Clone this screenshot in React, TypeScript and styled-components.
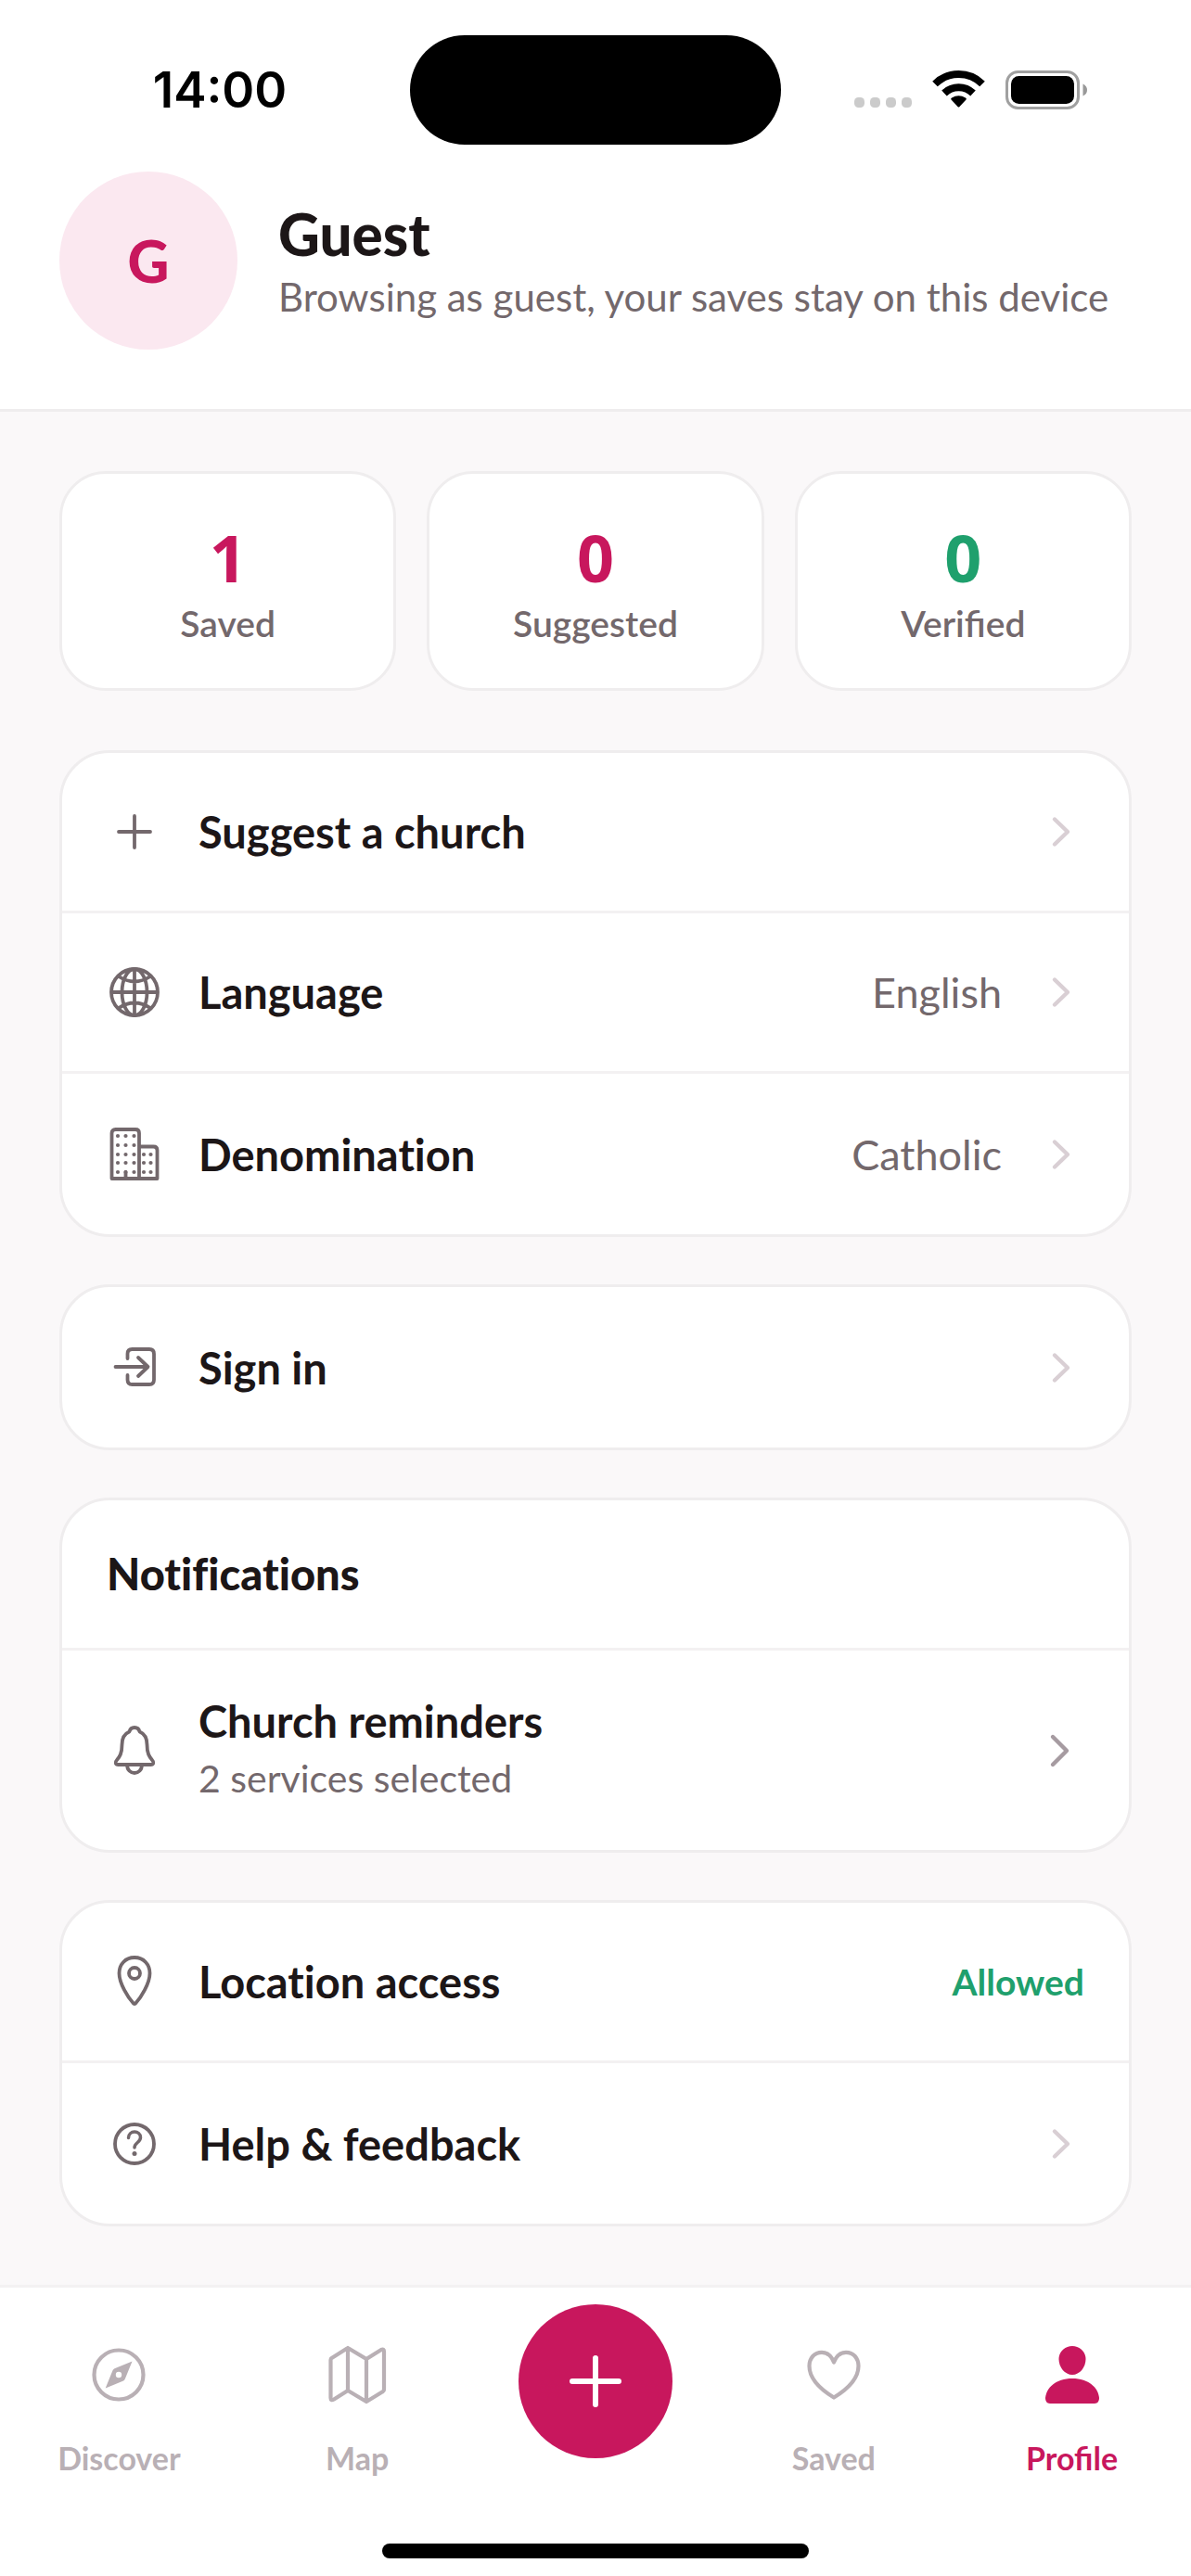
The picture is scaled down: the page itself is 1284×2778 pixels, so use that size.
import { ReactNode } from "react";
import styled, { createGlobalStyle } from "styled-components";

const color = {
    primary: "#c8175d",
    primarySoft: "#fbe8f0",
    green: "#1fa06d",
    ink: "#1c1617",
    sub: "#73686c",
    muted: "#b9b0b5",
    chevron: "#d9cfd4",
    chevronDark: "#a69ba1",
    line: "#efedee",
    divider: "#f3f1f2",
    page: "#faf8f9",
}

const GlobalStyle = createGlobalStyle`
    *{
        box-sizing: border-box;
        margin: 0;
        padding: 0;
    }
    body{
        background-color: ${color.page};
        color: ${color.ink};
        font-family: Lato, "Liberation Sans", sans-serif;
    }
    button{
        border: none;
        background: none;
        color: inherit;
        font: inherit;
        text-align: left;
        cursor: pointer;
    }
    a{
        color: inherit;
        text-decoration: none;
    }
    svg{
        display: block;
        flex-shrink: 0;
    }
`

const Page = styled.div`
    display: flex;
    flex-direction: column;
    min-height: 100vh;
`

const Header = styled.header`
    background-color: #fff;
    border-bottom: 3px solid ${color.line};
    padding-bottom: 64px;
`

const StatusBar = styled.div`
    display: grid;
    grid-template-columns: 1fr 400px 1fr;
    align-items: center;
    padding: 38px 32px 29px;
`

const Time = styled.time`
    justify-self: center;
    color: #000;
    font-family: Inter, sans-serif;
    font-size: 53px;
    font-weight: 600;
`

const Island = styled.div`
    height: 118px;
    border-radius: 59px;
    background-color: #000;
`

const StatusIcon = styled.svg`
    justify-self: center;
`

const Profile = styled.div`
    display: flex;
    align-items: center;
    gap: 44px;
    padding: 0 64px;
`

const Avatar = styled.div`
    display: flex;
    align-items: center;
    justify-content: center;
    width: 192px;
    height: 192px;
    border-radius: 50%;
    background-color: ${color.primarySoft};
    color: ${color.primary};
    font-size: 62px;
    font-weight: 900;
    line-height: 76px;
`

const Name = styled.h1`
    padding-top: 2px;
    font-size: 62px;
    font-weight: 900;
    line-height: 76px;
`

const Description = styled.p`
    color: ${color.sub};
    font-size: 42px;
    line-height: 60px;
`

const Main = styled.main`
    display: flex;
    flex: 1;
    flex-direction: column;
    gap: 51px;
    padding: 64px 64px 63px;
`

const Stats = styled.dl`
    display: grid;
    grid-template-columns: repeat(3, 1fr);
    gap: 33px;
    margin-bottom: 13px;
`

const Card = styled.section`
    overflow: hidden;
    border: 3px solid ${color.line};
    border-radius: 54px;
    background-color: #fff;
`

const Stat = styled.div`
    display: flex;
    flex-direction: column-reverse;
    align-items: center;
    padding: 48px 0 41px;
    border: 3px solid ${color.line};
    border-radius: 50px;
    background-color: #fff;
`

const StatValue = styled.dd<{ $green?: boolean }>`
    color: ${({ $green }) => ($green ? color.green : color.primary)};
    font-family: "Open Sans", sans-serif;
    font-size: 70px;
    font-weight: 700;
    line-height: 84px;
`

const StatLabel = styled.dt`
    color: ${color.sub};
    font-size: 39px;
    font-weight: 600;
    line-height: 58px;
`

const Row = styled.button<{ $tall?: boolean }>`
    display: flex;
    align-items: center;
    gap: 39px;
    width: 100%;
    min-height: ${({ $tall }) => ($tall ? 215 : 173)}px;
    padding: 0 48px;
    font-variant-ligatures: none;
    &:not(:last-child){
        border-bottom: 3px solid ${color.divider};
    }
`

const RowText = styled.span`
    flex: 1;
    font-size: 47px;
    font-weight: 700;
    line-height: 60px;
`

const RowHint = styled.span`
    display: block;
    color: ${color.sub};
    font-size: 41px;
    font-weight: 400;
    line-height: 64px;
`

const RowValue = styled.span`
    color: ${color.sub};
    font-size: 45px;
`

const RowStatus = styled.span`
    color: ${color.green};
    font-size: 39px;
    font-weight: 700;
`

const CardTitle = styled.h2`
    padding: 49px 48px 50px;
    border-bottom: 3px solid ${color.divider};
    font-size: 47px;
    font-weight: 900;
    font-variant-ligatures: none;
    line-height: 60px;
`

const TabBar = styled.footer`
    border-top: 3px solid ${color.divider};
    background-color: #fff;
`

const Tabs = styled.nav`
    display: grid;
    grid-template-columns: repeat(5, 1fr);
    justify-items: center;
`

const Tab = styled.a<{ $active?: boolean }>`
    display: flex;
    flex-direction: column;
    align-items: center;
    gap: 38px;
    padding-top: 62px;
    color: ${({ $active }) => ($active ? color.primary : color.muted)};
    font-size: 34px;
    font-weight: 700;
    line-height: 40px;
`

const AddButton = styled.button`
    display: flex;
    align-items: center;
    justify-content: center;
    width: 166px;
    height: 166px;
    margin-top: 18px;
    border-radius: 50%;
    background-color: ${color.primary};
    color: #fff;
`

const HomeIndicator = styled.div`
    width: 460px;
    height: 16px;
    margin: 72px auto 19px;
    border-radius: 8px;
    background-color: #000;
`

const RowIcon = ({ children }: { children: ReactNode }):JSX.Element => (
    <svg width="60" height="60" viewBox="0 0 60 60" fill="none" stroke={color.sub} strokeWidth="3.8" strokeLinecap="round" strokeLinejoin="round" aria-hidden="true">
        {children}
    </svg>
)

const TabIcon = ({ children }: { children: ReactNode }):JSX.Element => (
    <svg width="64" height="64" viewBox="0 0 64 64" fill="none" stroke="currentColor" strokeWidth="4.2" strokeLinecap="round" strokeLinejoin="round" aria-hidden="true">
        {children}
    </svg>
)

const Chevron = ({ dark }: { dark?: boolean }):JSX.Element => (
    <svg width="50" height="60" viewBox="0 0 50 60" fill="none" stroke={dark ? color.chevronDark : color.chevron} strokeWidth="4.4" strokeLinecap="round" strokeLinejoin="round" aria-hidden="true">
        <path d={dark ? "M16 15L31 30L16 45" : "M18 16.500L32 30L18 43.500"}/>
    </svg>
)

const StatusIcons = ():JSX.Element => (
    <StatusIcon width="252" height="44" viewBox="0 0 252 44" aria-hidden="true">
        <g fill="#cbcbcb">
            {[0, 17, 34, 51].map((x) => (
                <rect key={x} x={x} y="30" width="11" height="11" rx="4.5"/>
            ))}
        </g>
        <g fill="none" stroke="#000" strokeWidth="8">
            <path d="M87 15.5A36.5 36.5 0 0 1 138 15.5"/>
            <path d="M97 25.5A22.3 22.3 0 0 1 128 25.5"/>
        </g>
        <path d="M104.5 32.5Q103.5 31.5 105 30.5Q112.5 26 120 30.5Q121.5 31.5 120.5 32.5L113.5 40Q112.5 41 111.5 40Z"/>
        <rect x="164.5" y="2.5" width="77" height="39" rx="12" fill="none" stroke="#a0a0a0" strokeWidth="3"/>
        <rect x="169" y="7" width="68" height="30" rx="8.5"/>
        <path d="M246.5 15.5Q251 17.5 251 22Q251 26.5 246.5 28.5Z" fill="#999"/>
    </StatusIcon>
)

const dots = [10, 20, 30, 39, 49];

const App = ():JSX.Element => {
    return (
        <>
            <GlobalStyle/>
            <Page>
                <Header>
                    <StatusBar>
                        <Time>14:00</Time>
                        <Island/>
                        <StatusIcons/>
                    </StatusBar>
                    <Profile>
                        <Avatar>G</Avatar>
                        <div>
                            <Name>Guest</Name>
                            <Description>Browsing as guest, your saves stay on this device</Description>
                        </div>
                    </Profile>
                </Header>
                <Main>
                    <Stats>
                        <Stat>
                            <StatLabel>Saved</StatLabel>
                            <StatValue>1</StatValue>
                        </Stat>
                        <Stat>
                            <StatLabel>Suggested</StatLabel>
                            <StatValue>0</StatValue>
                        </Stat>
                        <Stat>
                            <StatLabel>Verified</StatLabel>
                            <StatValue $green>0</StatValue>
                        </Stat>
                    </Stats>
                    <Card>
                        <Row>
                            <RowIcon>
                                <path d="M30 13V47M13 30H47"/>
                            </RowIcon>
                            <RowText>Suggest a church</RowText>
                            <Chevron/>
                        </Row>
                        <Row>
                            <RowIcon>
                                <circle cx="30" cy="30" r="25"/>
                                <ellipse cx="30" cy="30" rx="13.5" ry="25"/>
                                <path d="M30 5V55M5 30H55M13 13Q30 24 47 13M13 47Q30 36 47 47" strokeLinecap="butt"/>
                            </RowIcon>
                            <RowText>Language</RowText>
                            <RowValue>English</RowValue>
                            <Chevron/>
                        </Row>
                        <Row>
                            <RowIcon>
                                <path d="M5.5 56V7Q5.5 3 9.5 3H31Q35 3 35 7V56M35 21.5H50.5Q54.5 21.5 54.5 25.5V56M5.5 56H54.5M20.5 56V49"/>
                                <g fill={color.sub} stroke="none">
                                    {dots.map((y) => (
                                        <g key={y}>
                                            <circle cx="12" cy={y} r="2.1"/>
                                            <circle cx="20.5" cy={y} r="2.1"/>
                                            <circle cx="29.5" cy={y} r="2.1"/>
                                            {y > 20 && <circle cx="40" cy={y} r="2.1"/>}
                                            {y > 20 && <circle cx="47.5" cy={y} r="2.1"/>}
                                        </g>
                                    ))}
                                </g>
                            </RowIcon>
                            <RowText>Denomination</RowText>
                            <RowValue>Catholic</RowValue>
                            <Chevron/>
                        </Row>
                    </Card>
                    <Card>
                        <Row>
                            <RowIcon>
                                <path d="M22.5 20V15Q22.5 10 27.5 10H46Q51 10 51 15V43Q51 48 46 48H27.5Q22.5 48 22.5 43V38M9.5 29H44M34 19L44.5 29L34 39"/>
                            </RowIcon>
                            <RowText>Sign in</RowText>
                            <Chevron/>
                        </Row>
                    </Card>
                    <Card>
                        <CardTitle>Notifications</CardTitle>
                        <Row $tall>
                            <RowIcon>
                                <path d="M30 5C27 5 25 7 24.5 9.5C18.5 12 16.5 17.5 16.5 23.5C16.5 33 14 36.5 11 40C8.5 42.5 9.5 45 12.5 45H47.5C50.5 45 51.5 42.5 49 40C46 36.5 43.5 33 43.5 23.5C43.5 17.5 41.5 12 35.5 9.5C35 7 33 5 30 5Z"/>
                                <path d="M22 45C22 57 38 57 38 45"/>
                            </RowIcon>
                            <RowText>
                                Church reminders
                                <RowHint>2 services selected</RowHint>
                            </RowText>
                            <Chevron dark/>
                        </Row>
                    </Card>
                    <Card>
                        <Row>
                            <RowIcon>
                                <path d="M30 4C20 4 13.5 11.5 13.5 21C13.5 32 23 47 28.5 53Q30 55 31.5 53C37 47 46.5 32 46.5 21C46.5 11.5 40 4 30 4Z"/>
                                <circle cx="30" cy="21" r="6"/>
                            </RowIcon>
                            <RowText>Location access</RowText>
                            <RowStatus>Allowed</RowStatus>
                        </Row>
                        <Row>
                            <RowIcon>
                                <circle cx="30" cy="30" r="21"/>
                                <path d="M23.5 23.5C23.5 15 36.5 15 36.5 23C36.5 28.5 30 28.5 30 34" strokeWidth="3.5"/>
                                <circle cx="30" cy="40.5" r="2.5" fill={color.sub} stroke="none"/>
                            </RowIcon>
                            <RowText>Help &amp; feedback</RowText>
                            <Chevron/>
                        </Row>
                    </Card>
                </Main>
                <TabBar>
                    <Tabs>
                        <Tab href="#discover">
                            <TabIcon>
                                <circle cx="32" cy="32" r="26.5"/>
                                <path d="M46.5 17.5L38.8 36.5Q38 38.2 36.5 38.8L17.7 46.5L25.4 27.5Q26 26 27.5 25.3ZM32 28.8A3.2 3.2 0 1 0 32 35.2A3.2 3.2 0 1 0 32 28.8Z" fill="currentColor" fillRule="evenodd" stroke="none"/>
                            </TabIcon>
                            Discover
                        </Tab>
                        <Tab href="#map">
                            <TabIcon>
                                <path d="M3.5 16Q3.5 14.5 5 13.7L22 3L42 15L58 5Q61 3.5 61 7V48Q61 49.5 59.5 50.3L42 61L22 49L7 58.5Q3.5 60.5 3.5 57ZM22 3V49M42 15V61"/>
                            </TabIcon>
                            Map
                        </Tab>
                        <AddButton aria-label="Add">
                            <svg width="60" height="60" viewBox="0 0 60 60" stroke="currentColor" strokeWidth="6" strokeLinecap="round" aria-hidden="true">
                                <path d="M30 5V55M5 30H55"/>
                            </svg>
                        </AddButton>
                        <Tab href="#saved">
                            <TabIcon>
                                <path d="M32 18.5C29 11 24 7.8 19 7.8C11 7.8 5.5 14 5.5 22.5C5.5 36 18 48 32 56.5C46 48 58.5 36 58.5 22.5C58.5 14 53 7.8 45 7.8C40 7.8 35 11 32 18.5Z"/>
                            </TabIcon>
                            Saved
                        </Tab>
                        <Tab href="#profile" $active aria-current="page">
                            <TabIcon>
                                <g fill="currentColor" stroke="none">
                                    <path d="M32 1C40 1 46.5 7 46.5 15C46.5 24 40 32 32 32C24 32 17.5 24 17.5 15C17.5 7 24 1 32 1Z"/>
                                    <path d="M8 63C4.5 63 3 60 3 57C4 46 14 36 32 36C50 36 60 46 61 57C61 60 59.5 63 56 63Z"/>
                                </g>
                            </TabIcon>
                            Profile
                        </Tab>
                    </Tabs>
                    <HomeIndicator/>
                </TabBar>
            </Page>
        </>
    )
}

export default App;
